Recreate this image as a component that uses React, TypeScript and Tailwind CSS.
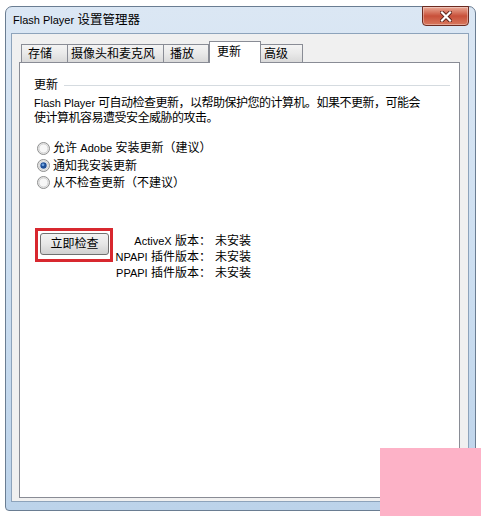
import React from "react";

const tabs = [
  { label: "存储", cls: "w-[47px] pl-[6px]" },
  { label: "摄像头和麦克风", cls: "w-[97px] pl-[3px]" },
  { label: "播放", cls: "w-[46px] pl-[6px]" },
  { label: "更新", cls: "w-[52px] pl-[7px]", active: true },
  { label: "高级", cls: "w-[43px] pl-[3px]" },
];

function Latin({ children }: { children: React.ReactNode }) {
  return <span className="text-[11px] tracking-normal">{children}</span>;
}

function Radio({ checked }: { checked?: boolean }) {
  return (
    <svg width="13" height="13" viewBox="0 0 13 13" className="shrink-0">
      <circle cx="6.5" cy="6.5" r="6" fill="#e9e9e9" stroke="#8e8f8f" />
      <circle cx="6.5" cy="6.5" r="4.5" fill="#f7f7f7" stroke="#d4d4d4" />
      {checked && (
        <>
          <circle cx="6.5" cy="6.5" r="3.2" fill="#1f4f97" />
          <circle cx="6" cy="5.8" r="1.4" fill="#6fa3e0" />
        </>
      )}
    </svg>
  );
}

export default function App() {
  return (
    <div className="relative w-[481px] h-[516px] overflow-hidden bg-white font-['Liberation_Sans','Noto_Sans_CJK_SC',sans-serif] text-black text-[12px]">
      {/* Window frame */}
      <div className="ml-[5px] mt-[6px] w-[471px] h-[505px] flex flex-col rounded-t-[7px] rounded-b-[4px] border border-[#6a7d92] bg-gradient-to-b from-[#dbe7f4] via-[#cddff1] to-[#bcd3ea] pl-[5px] pr-[6px] pb-[8px]">
        {/* Title bar */}
        <div className="h-[26px] flex items-start justify-between">
          <div className="pl-[2px] pt-[6px] text-[12.5px] leading-[14px]">
            <Latin>Flash Player</Latin> 设置管理器
          </div>
          <div className="-mt-px w-[47px] h-[20px] flex items-center justify-center rounded-b-[4px] border border-[#6b2b21] bg-gradient-to-b from-[#e9a996] via-[#c8503a] to-[#d8775d] shadow-[inset_0_0_0_1px_rgba(255,255,255,0.35)]">
            <svg width="12" height="11" viewBox="0 0 12 11">
              <path d="M2 1.5 L10 9.5 M10 1.5 L2 9.5" stroke="#5a2118" strokeWidth="4" strokeLinecap="square" />
              <path d="M2 1.5 L10 9.5 M10 1.5 L2 9.5" stroke="#ffffff" strokeWidth="2.2" strokeLinecap="square" />
            </svg>
          </div>
        </div>

        {/* Client area */}
        <div className="flex-1 flex flex-col border border-[#8da3bb] bg-[#f0f0f0] pt-[7px] pl-[7px] pr-[8px] pb-[3px]">
          {/* Tabs */}
          <div className="h-[21px] flex items-end pl-[2px]">
            {tabs.map((t) =>
              t.active ? (
                <div
                  key={t.label}
                  className={`${t.cls} relative z-10 -mb-px h-[22px] border border-b-0 border-[#898c95] bg-white text-[12px] leading-[18px] pt-[1px]`}
                >
                  {t.label}
                </div>
              ) : (
                <div
                  key={t.label}
                  className={`${t.cls} h-[18px] border border-b-0 border-[#898c95] -ml-px first:ml-0 bg-gradient-to-b from-[#f4f4f4] via-[#e9e9e9] to-[#d9d9d9] text-[12px] leading-[18px]`}
                >
                  {t.label}
                </div>
              )
            )}
          </div>

          {/* Panel */}
          <div className="flex-1 border border-[#898c95] bg-white pl-[14px] pr-[9px] pt-[14px]">
            <div className="h-[16px] flex items-center gap-[6px]">
              <span className="leading-[16px]">更新</span>
              <div className="flex-1 h-px bg-[#d5dbe0]" />
            </div>
            <div className="mt-[3px] leading-[15px] tracking-[-0.5px] whitespace-nowrap">
              <div>
                <Latin>Flash Player</Latin> 可自动检查更新，以帮助保护您的计算机。如果不更新，可能会
              </div>
              <div>使计算机容易遭受安全威胁的攻击。</div>
            </div>

            <div className="mt-[13px] ml-[3px] flex flex-col">
              <div className="h-[18px] flex items-center gap-[3px]">
                <Radio />
                <span>
                  允许 <Latin>Adobe</Latin> 安装更新（建议）
                </span>
              </div>
              <div className="h-[17px] flex items-center gap-[3px]">
                <Radio checked />
                <span>通知我安装更新</span>
              </div>
              <div className="h-[17px] flex items-center gap-[3px]">
                <Radio />
                <span>从不检查更新（不建议）</span>
              </div>
            </div>

            <div className="mt-[37px] ml-px flex items-start">
              <div className="w-[78px] h-[34px] border-[3px] border-[#d8282f] p-[2px]">
                <div className="w-[69px] h-[22px] flex items-center justify-center rounded-[3px] border border-[#707070] bg-gradient-to-b from-[#f3f3f3] via-[#e6e6e6] to-[#d0d0d0] text-[12px]">
                  立即检查
                </div>
              </div>
              <div className="mt-[5px] ml-[4px] flex gap-[4px] leading-[16px] whitespace-nowrap">
                <div className="w-[94px] flex flex-col items-end">
                  <span>
                    <Latin>ActiveX</Latin> 版本：
                  </span>
                  <span>
                    <Latin>NPAPI</Latin> 插件版本：
                  </span>
                  <span>
                    <Latin>PPAPI</Latin> 插件版本：
                  </span>
                </div>
                <div className="flex flex-col">
                  <span>未安装</span>
                  <span>未安装</span>
                  <span>未安装</span>
                </div>
              </div>
            </div>
          </div>
        </div>
      </div>

      {/* Watermark block */}
      <div className="absolute left-[380px] top-[448px] right-0 bottom-0 bg-[#fdb2c7]" />
    </div>
  );
}
